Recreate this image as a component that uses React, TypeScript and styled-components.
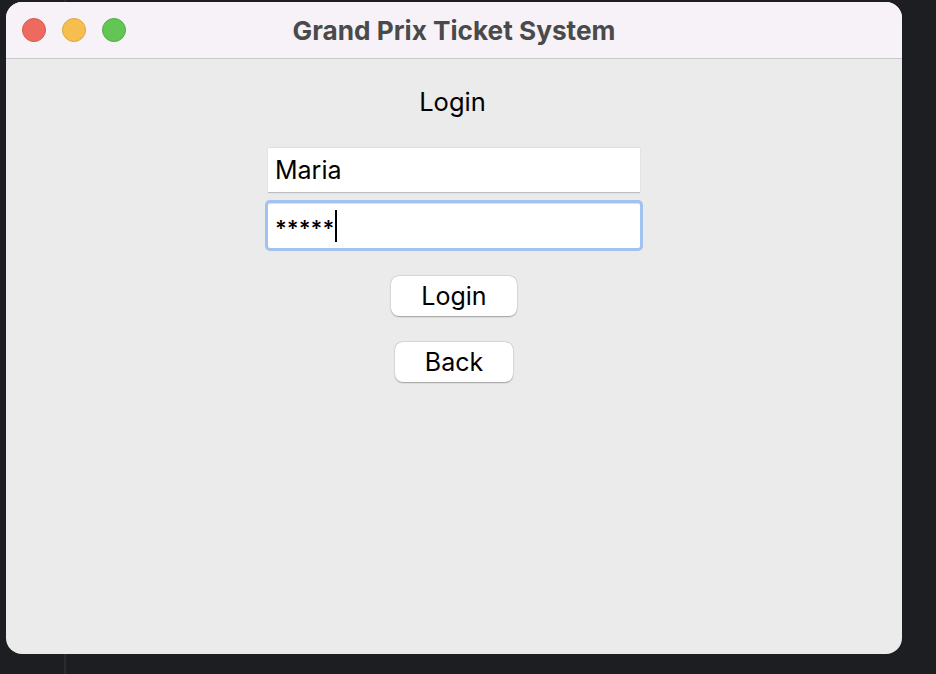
import React from "react";
import styled, { createGlobalStyle } from "styled-components";

const GlobalStyle = createGlobalStyle`
  html, body {
    margin: 0;
    padding: 0;
    width: 936px;
    height: 674px;
    overflow: hidden;
    background: #1d1e21;
    font-family: Inter, "Noto Sans", "Liberation Sans", sans-serif;
  }
`;

const Desktop = styled.div`
  width: 936px;
  height: 674px;
  box-sizing: border-box;
  padding: 2px 0 0 6px;
  background:
    linear-gradient(#2a2b2e, #2a2b2e) 64px 0 / 2px 100% no-repeat,
    #1d1e21;
`;

const Window = styled.div`
  width: 896px;
  height: 652px;
  border-radius: 16px;
  overflow: hidden;
  background: #ebebeb;
  display: flex;
  flex-direction: column;
`;

const TitleBar = styled.div`
  height: 56px;
  flex: none;
  background: #f7f2f7;
  border-bottom: 1px solid #cdcacd;
  position: relative;
  display: flex;
  align-items: center;
  justify-content: center;
`;

const Lights = styled.div`
  position: absolute;
  left: 16px;
  top: 16px;
  display: flex;
  gap: 16px;
`;

const Light = styled.span<{ $c: string; $b: string }>`
  width: 24px;
  height: 24px;
  border-radius: 50%;
  box-sizing: border-box;
  background: ${(p) => p.$c};
  border: 1px solid ${(p) => p.$b};
`;

const Title = styled.div`
  font-size: 26.2px;
  font-weight: 700;
  color: #4a4a4a;
  padding-top: 1px;
`;

const Content = styled.div`
  flex: 1;
  display: flex;
  flex-direction: column;
  align-items: center;
  padding-top: 28px;
`;

const Heading = styled.div`
  font-size: 25.5px;
  color: #000;
  line-height: 30px;
  margin-bottom: 30px;
  margin-right: 3px;
`;

const Fields = styled.div`
  display: flex;
  flex-direction: column;
  gap: 11px;
`;

const Field = styled.div<{ $focus?: boolean }>`
  width: 372px;
  height: 45px;
  box-sizing: border-box;
  background: #fff;
  border-top: 1px solid #dedede;
  box-shadow: ${(p) =>
    p.$focus ? "0 0 0 3px #a2c2ef" : "0 1px 1px #bdbdbd"};
  border-radius: ${(p) => (p.$focus ? "2px" : "0")};
  display: flex;
  align-items: center;
  padding-left: 7px;
  font-size: 25px;
  color: #000;
`;

const Stars = styled.span`
  font-size: 22px;
  font-weight: 600;
  padding-top: 4px;
`;

const Caret = styled.span`
  width: 2px;
  height: 32px;
  background: #000;
  margin-left: 1px;
`;

const Buttons = styled.div`
  display: flex;
  flex-direction: column;
  align-items: center;
  gap: 26px;
  margin-top: 28px;
`;

const Button = styled.button`
  height: 40px;
  padding: 0 30px;
  border: none;
  border-radius: 8px;
  background: #fff;
  box-shadow: 0 0.5px 1.5px rgba(0, 0, 0, 0.3), 0 0 0 0.5px rgba(0, 0, 0, 0.06);
  font-family: inherit;
  font-size: 25px;
  color: #000;
`;

export default function App() {
  return (
    <>
      <GlobalStyle />
      <Desktop>
        <Window>
          <TitleBar>
            <Lights>
              <Light $c="#ee6a5f" $b="#d45a50" />
              <Light $c="#f6be4f" $b="#dca542" />
              <Light $c="#62c554" $b="#52ad46" />
            </Lights>
            <Title>Grand Prix Ticket System</Title>
          </TitleBar>
          <Content>
            <Heading>Login</Heading>
            <Fields>
              <Field>Maria</Field>
              <Field $focus>
                <Stars>*****</Stars>
                <Caret />
              </Field>
            </Fields>
            <Buttons>
              <Button>Login</Button>
              <Button>Back</Button>
            </Buttons>
          </Content>
        </Window>
      </Desktop>
    </>
  );
}
